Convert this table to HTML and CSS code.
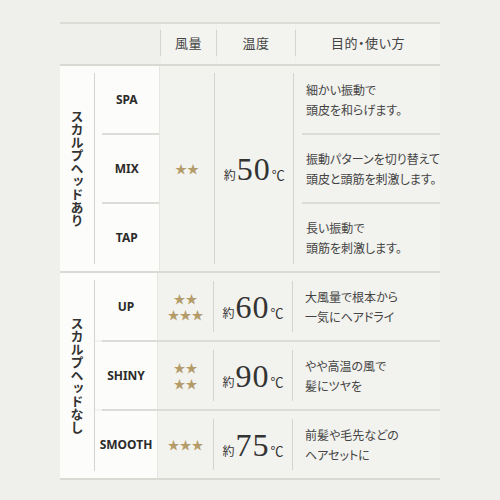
FILE: index.html
```html
<!DOCTYPE html>
<html lang="ja">
<head>
<meta charset="utf-8">
<link rel="stylesheet" href="styles.css">
</head>
<body>
<div class="table">
  <div class="head">
    <div class="h-blank"></div>
    <div class="vl"></div>
    <div class="h-cell c-wind">風量</div>
    <div class="vl"></div>
    <div class="h-cell c-temp">温度</div>
    <div class="vl"></div>
    <div class="h-cell c-desc">目的・使い方</div>
  </div>

  <div class="group g1">
    <div class="left">
      <div class="label">スカルプヘッドあり</div>
      <div class="vl"></div>
      <div class="modes">
        <div class="mode">SPA</div>
        <div class="sep"></div>
        <div class="mode">MIX</div>
        <div class="sep"></div>
        <div class="mode">TAP</div>
      </div>
    </div>
    <div class="vl faint"></div>
    <div class="stars c-wind"><span>★★</span></div>
    <div class="vl"></div>
    <div class="temp c-temp"><span class="yaku">約</span><span class="num">50</span><span class="deg">℃</span></div>
    <div class="vl"></div>
    <div class="descs c-desc">
      <div class="desc">細かい振動で<br>頭皮を和らげます。</div>
      <div class="sep"></div>
      <div class="desc">振動パターンを切り替えて<br>頭皮と頭筋を刺激します。</div>
      <div class="sep"></div>
      <div class="desc">長い振動で<br>頭筋を刺激します。</div>
    </div>
  </div>

  <div class="group g2">
    <div class="label-wrap">
      <div class="label">スカルプヘッドなし</div>
      <div class="vl"></div>
    </div>
    <div class="rows">
      <div class="row">
        <div class="mode m2">UP</div>
        <div class="vl faint"></div>
        <div class="stars c-wind"><span>★★<br>★★★</span></div>
        <div class="vl"></div>
        <div class="temp c-temp"><span class="yaku">約</span><span class="num">60</span><span class="deg">℃</span></div>
        <div class="vl"></div>
        <div class="desc c-desc">大風量で根本から<br>一気にヘアドライ</div>
      </div>
      <div class="sep"></div>
      <div class="row">
        <div class="mode m2">SHINY</div>
        <div class="vl faint"></div>
        <div class="stars c-wind"><span>★★<br>★★</span></div>
        <div class="vl"></div>
        <div class="temp c-temp"><span class="yaku">約</span><span class="num">90</span><span class="deg">℃</span></div>
        <div class="vl"></div>
        <div class="desc c-desc">やや高温の風で<br>髪にツヤを</div>
      </div>
      <div class="sep"></div>
      <div class="row">
        <div class="mode m2">SMOOTH</div>
        <div class="vl faint"></div>
        <div class="stars c-wind"><span>★★★</span></div>
        <div class="vl"></div>
        <div class="temp c-temp"><span class="yaku">約</span><span class="num">75</span><span class="deg">℃</span></div>
        <div class="vl"></div>
        <div class="desc c-desc">前髪や毛先などの<br>ヘアセットに</div>
      </div>
    </div>
  </div>
</div>
</body>
</html>
```

FILE: styles.css
```css
html, body {
  margin: 0;
  padding: 0;
  background: #efefeb;
}
body {
  font-family: "Noto Sans CJK JP", "Noto Sans", sans-serif;
  color: #3a3a3a;
  height: 500px;
  overflow: hidden;
}
.table {
  margin: 22px 0 0 60px;
  width: 380px;
  border-top: 2px solid #dcdcd7;
}
.head {
  display: flex;
  height: 40px;
  border-bottom: 2px solid #d9d9d4;
}
.h-blank {
  width: 100px;
  background: #efefeb;
}
.head .vl {
  margin: 6px 0 8px;
}
.h-cell {
  display: flex;
  align-items: center;
  justify-content: center;
  padding-bottom: 3px;
  font-size: 13px;
  color: #444;
  background: #f3f3ef;
  font-feature-settings: "palt";
  letter-spacing: 0.5px;
}
.c-wind { width: 55px; }
.c-temp { width: 78px; }
.c-desc { flex: 1; }

.vl {
  width: 1px;
  flex: none;
  background: #d3d3cf;
  margin: 7px 0;
}
.vl.faint {
  background: #e6e6e2;
  margin: 0;
}
.sep {
  height: 2px;
  background: #dcdcd8;
  margin-left: 7px;
}

.group {
  display: flex;
  border-bottom: 2px solid #dadad5;
  background: #f2f2ee;
}
.left {
  width: 99px;
  display: flex;
  background: #fcfcfa;
}
.label {
  width: 34px;
  writing-mode: vertical-rl;
  display: flex;
  align-items: center;
  justify-content: center;
  font-size: 13px;
  font-weight: 700;
  color: #333;
  background: #fcfcfa;
}
.modes {
  flex: 1;
  display: flex;
  flex-direction: column;
}
.mode {
  height: 67px;
  display: flex;
  align-items: center;
  justify-content: center;
  font-family: "Noto Sans", sans-serif;
  font-weight: 700;
  font-size: 12px;
  letter-spacing: 0;
  color: #2b2b2b;
}
.stars {
  display: flex;
  align-items: center;
  justify-content: center;
  text-align: center;
  color: #b49c6a;
  font-size: 12px;
  line-height: 16px;
  letter-spacing: 0;
}
.temp {
  display: flex;
  align-items: baseline;
  justify-content: center;
  align-self: center;
  color: #333;
}
.yaku {
  font-size: 12px;
  margin-right: 1px;
}
.num {
  font-family: "Liberation Serif", serif;
  font-size: 32px;
  letter-spacing: 1px;
  line-height: 1;
}
.deg {
  font-size: 13px;
  margin-left: 1px;
}
.descs {
  display: flex;
  flex-direction: column;
}
.desc {
  height: 67px;
  display: flex;
  align-items: center;
  padding-left: 12px;
  font-size: 12px;
  line-height: 20px;
  color: #444;
  white-space: nowrap;
  font-feature-settings: "palt";
  letter-spacing: 0;
}
.descs .sep { margin-left: 8px; }

.label-wrap {
  display: flex;
  background: #fcfcfa;
}
.rows {
  flex: 1;
  display: flex;
  flex-direction: column;
}
.row {
  display: flex;
  height: 67px;
}
.m2 {
  width: 62px;
  background: #fcfcfa;
}
.row .c-temp { align-self: center; }
.row .vl { margin: 8px 0; }
.row .vl.faint { margin: 0; }
.rows .sep { margin-left: 7px; }
```
